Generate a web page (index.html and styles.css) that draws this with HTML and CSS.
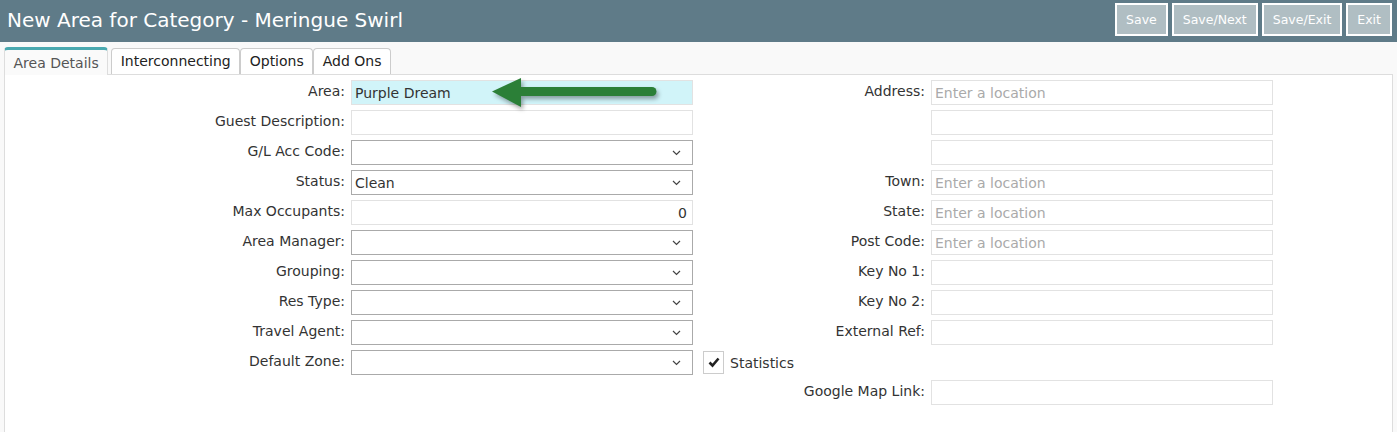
FILE: index.html
```html
<!DOCTYPE html>
<html lang="en">
<head>
    <meta charset="UTF-8">
    <meta name="viewport" content="width=device-width, initial-scale=1.0">
    <title>New Area for Category - Meringue Swirl</title>
    <link rel="stylesheet" href="styles.css">
</head>
<body>

<div class="header">
    <div class="title">New Area for Category - Meringue Swirl</div>
    <div class="actions">
        <button class="btn">Save</button>
        <button class="btn">Save/Next</button>
        <button class="btn">Save/Exit</button>
        <button class="btn">Exit</button>
    </div>
</div>

<div class="tabs">
    <div class="tab active">Area Details</div>
    <div class="tab">Interconnecting</div>
    <div class="tab">Options</div>
    <div class="tab">Add Ons</div>
</div>

<div class="panel">
    <div class="form">
        <!-- row 1 -->
        <label class="lbl">Area:</label>
        <div class="cell-area">
            <input class="field area" type="text" value="Purple Dream">
            <svg class="pointer" width="180" height="40" viewBox="0 0 180 40">
                <g fill="#2b7f37" stroke="#2b7f37">
                    <line x1="30" y1="17.5" x2="164" y2="17.5" stroke-width="9" stroke-linecap="round"/>
                    <polygon points="4,17.5 33,4 33,33" stroke-width="0"/>
                </g>
            </svg>
        </div>
        <label class="lbl">Address:</label>
        <input class="field" type="text" placeholder="Enter a location">

        <!-- row 2 -->
        <label class="lbl">Guest Description:</label>
        <input class="field" type="text">
        <span></span>
        <input class="field" type="text">

        <!-- row 3 -->
        <label class="lbl">G/L Acc Code:</label>
        <div class="select"><span></span><svg class="chev" width="9" height="6" viewBox="0 0 9 6"><polyline points="1,1 4.5,4.5 8,1" fill="none" stroke="#444" stroke-width="1.2"/></svg></div>
        <span></span>
        <input class="field" type="text">

        <!-- row 4 -->
        <label class="lbl">Status:</label>
        <div class="select"><span>Clean</span><svg class="chev" width="9" height="6" viewBox="0 0 9 6"><polyline points="1,1 4.5,4.5 8,1" fill="none" stroke="#444" stroke-width="1.2"/></svg></div>
        <label class="lbl">Town:</label>
        <input class="field" type="text" placeholder="Enter a location">

        <!-- row 5 -->
        <label class="lbl">Max Occupants:</label>
        <input class="field num" type="text" value="0">
        <label class="lbl">State:</label>
        <input class="field" type="text" placeholder="Enter a location">

        <!-- row 6 -->
        <label class="lbl">Area Manager:</label>
        <div class="select"><span></span><svg class="chev" width="9" height="6" viewBox="0 0 9 6"><polyline points="1,1 4.5,4.5 8,1" fill="none" stroke="#444" stroke-width="1.2"/></svg></div>
        <label class="lbl">Post Code:</label>
        <input class="field" type="text" placeholder="Enter a location">

        <!-- row 7 -->
        <label class="lbl">Grouping:</label>
        <div class="select"><span></span><svg class="chev" width="9" height="6" viewBox="0 0 9 6"><polyline points="1,1 4.5,4.5 8,1" fill="none" stroke="#444" stroke-width="1.2"/></svg></div>
        <label class="lbl">Key No 1:</label>
        <input class="field" type="text">

        <!-- row 8 -->
        <label class="lbl">Res Type:</label>
        <div class="select"><span></span><svg class="chev" width="9" height="6" viewBox="0 0 9 6"><polyline points="1,1 4.5,4.5 8,1" fill="none" stroke="#444" stroke-width="1.2"/></svg></div>
        <label class="lbl">Key No 2:</label>
        <input class="field" type="text">

        <!-- row 9 -->
        <label class="lbl">Travel Agent:</label>
        <div class="select"><span></span><svg class="chev" width="9" height="6" viewBox="0 0 9 6"><polyline points="1,1 4.5,4.5 8,1" fill="none" stroke="#444" stroke-width="1.2"/></svg></div>
        <label class="lbl">External Ref:</label>
        <input class="field" type="text">

        <!-- row 10 -->
        <label class="lbl">Default Zone:</label>
        <div class="select"><span></span><svg class="chev" width="9" height="6" viewBox="0 0 9 6"><polyline points="1,1 4.5,4.5 8,1" fill="none" stroke="#444" stroke-width="1.2"/></svg></div>
        <div class="check">
            <span class="box"><svg width="12" height="11" viewBox="0 0 12 11"><polyline points="1.5,5.5 4.5,8.5 10.5,1.5" fill="none" stroke="#222" stroke-width="2.6"/></svg></span>
            <span>Statistics</span>
        </div>
        <span></span>

        <!-- row 11 -->
        <span></span>
        <span></span>
        <label class="lbl">Google Map Link:</label>
        <input class="field" type="text">
    </div>
</div>

</body>
</html>
```

FILE: styles.css
```css
body {
    margin: 0;
    background-color: #f9f9f9;
    font-family: "DejaVu Sans", Verdana, sans-serif;
    font-size: 14px;
    color: #333;
}

.header {
    height: 42px;
    background-color: #5f7b88;
    display: flex;
    justify-content: space-between;
    align-items: flex-start;
    padding: 0 5px 0 7px;
}

.title {
    color: #fff;
    font-size: 20px;
    line-height: 40px;
}

.actions {
    display: flex;
    gap: 4px;
    padding-top: 3px;
}

.btn {
    height: 33px;
    padding: 0 9px;
    background-color: #b0bec3;
    border: 2px solid #fff;
    color: #fff;
    font-family: inherit;
    font-size: 12.5px;
    cursor: pointer;
}

.tabs {
    display: flex;
    align-items: flex-end;
    padding: 5px 4px 0;
    height: 28px;
    margin-bottom: -1px;
    position: relative;
    z-index: 1;
}

.tab {
    height: 25px;
    line-height: 25px;
    padding: 0 8.5px;
    background-color: #fff;
    border: 1px solid #ccc;
    border-bottom: none;
    border-radius: 4px 4px 0 0;
    color: #222;
    margin-right: 0;
    margin-bottom: 1px;
}

.tab.active {
    height: 25px;
    line-height: 27px;
    background-color: #fafafa;
    border-color: #ddd;
    border-top: 3px solid #4aa9b0;
    color: #555;
    margin-right: 3px;
    margin-bottom: 0;
}

.panel {
    margin: 0 4px;
    min-height: 360px;
    background-color: #fff;
    border: 1px solid #ddd;
}

.form {
    display: grid;
    grid-template-columns: 340px 342px 226px 342px;
    grid-auto-rows: 25px;
    column-gap: 6px;
    row-gap: 5px;
    padding-top: 5px;
}

.lbl {
    text-align: right;
    align-self: start;
    line-height: 22px;
    white-space: nowrap;
}

.field {
    box-sizing: border-box;
    width: 342px;
    height: 25px;
    margin: 0;
    padding: 0 3px;
    border: 1px solid #e2e2e2;
    font-family: inherit;
    font-size: 14px;
    color: #333;
    background-color: #fff;
    outline: none;
}

.field::placeholder {
    color: #aaa;
}

.field.area {
    background-color: #d1f4f9;
}

.field.num {
    text-align: right;
    padding-right: 5px;
}

.cell-area {
    position: relative;
}

.pointer {
    position: absolute;
    left: 137px;
    top: -6px;
    filter: drop-shadow(2px 3px 2px rgba(0, 0, 0, 0.35));
}

.select {
    box-sizing: border-box;
    height: 25px;
    border: 1px solid #aaa;
    padding: 0 11px 0 3px;
    display: flex;
    align-items: center;
    justify-content: space-between;
    color: #333;
}

.check {
    display: flex;
    align-items: center;
    gap: 6px;
    margin-left: 4px;
}

.box {
    box-sizing: border-box;
    width: 21px;
    height: 23px;
    border: 1px solid #ccc;
    display: flex;
    align-items: center;
    justify-content: center;
}
```
